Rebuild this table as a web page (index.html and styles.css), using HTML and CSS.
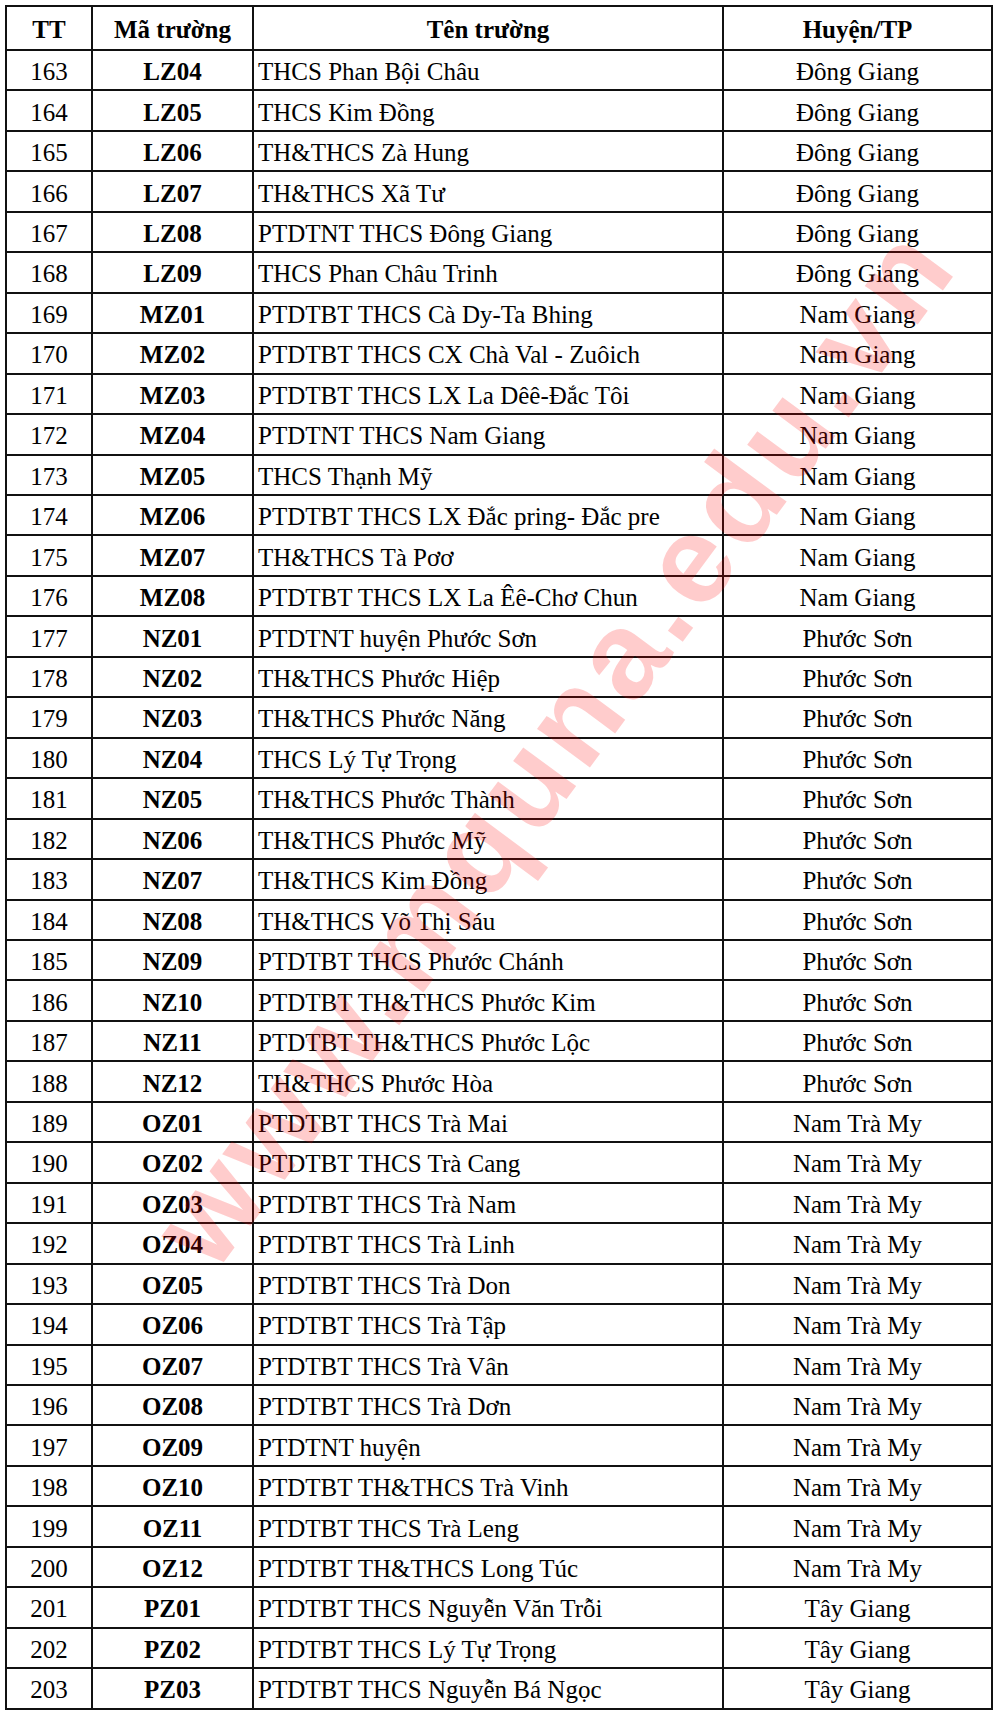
FILE: index.html
```html
<!DOCTYPE html>
<html lang="vi">
<head>
<meta charset="utf-8">
<title>Danh sách trường</title>
<link rel="stylesheet" href="styles.css">
</head>
<body>
<div class="page">
<table class="schools">
<colgroup>
<col class="c-tt"><col class="c-ma"><col class="c-ten"><col class="c-huyen">
</colgroup>
<thead>
<tr><th>TT</th><th>Mã trường</th><th>Tên trường</th><th>Huyện/TP</th></tr>
</thead>
<tbody>
<tr><td>163</td><td class="code">LZ04</td><td class="name">THCS Phan Bội Châu</td><td>Đông Giang</td></tr>
<tr><td>164</td><td class="code">LZ05</td><td class="name">THCS Kim Đồng</td><td>Đông Giang</td></tr>
<tr><td>165</td><td class="code">LZ06</td><td class="name">TH&amp;THCS Zà Hung</td><td>Đông Giang</td></tr>
<tr><td>166</td><td class="code">LZ07</td><td class="name">TH&amp;THCS Xã Tư</td><td>Đông Giang</td></tr>
<tr><td>167</td><td class="code">LZ08</td><td class="name">PTDTNT THCS Đông Giang</td><td>Đông Giang</td></tr>
<tr><td>168</td><td class="code">LZ09</td><td class="name">THCS Phan Châu Trinh</td><td>Đông Giang</td></tr>
<tr><td>169</td><td class="code">MZ01</td><td class="name">PTDTBT THCS Cà Dy-Ta Bhing</td><td>Nam Giang</td></tr>
<tr><td>170</td><td class="code">MZ02</td><td class="name">PTDTBT THCS CX Chà Val - Zuôich</td><td>Nam Giang</td></tr>
<tr><td>171</td><td class="code">MZ03</td><td class="name">PTDTBT THCS LX La Dêê-Đắc Tôi</td><td>Nam Giang</td></tr>
<tr><td>172</td><td class="code">MZ04</td><td class="name">PTDTNT THCS Nam Giang</td><td>Nam Giang</td></tr>
<tr><td>173</td><td class="code">MZ05</td><td class="name">THCS Thạnh Mỹ</td><td>Nam Giang</td></tr>
<tr><td>174</td><td class="code">MZ06</td><td class="name">PTDTBT THCS LX Đắc pring- Đắc pre</td><td>Nam Giang</td></tr>
<tr><td>175</td><td class="code">MZ07</td><td class="name">TH&amp;THCS Tà Pơơ</td><td>Nam Giang</td></tr>
<tr><td>176</td><td class="code">MZ08</td><td class="name">PTDTBT THCS LX La Êê-Chơ Chun</td><td>Nam Giang</td></tr>
<tr><td>177</td><td class="code">NZ01</td><td class="name">PTDTNT huyện Phước Sơn</td><td>Phước Sơn</td></tr>
<tr><td>178</td><td class="code">NZ02</td><td class="name">TH&amp;THCS Phước Hiệp</td><td>Phước Sơn</td></tr>
<tr><td>179</td><td class="code">NZ03</td><td class="name">TH&amp;THCS Phước Năng</td><td>Phước Sơn</td></tr>
<tr><td>180</td><td class="code">NZ04</td><td class="name">THCS Lý Tự Trọng</td><td>Phước Sơn</td></tr>
<tr><td>181</td><td class="code">NZ05</td><td class="name">TH&amp;THCS Phước Thành</td><td>Phước Sơn</td></tr>
<tr><td>182</td><td class="code">NZ06</td><td class="name">TH&amp;THCS Phước Mỹ</td><td>Phước Sơn</td></tr>
<tr><td>183</td><td class="code">NZ07</td><td class="name">TH&amp;THCS Kim Đồng</td><td>Phước Sơn</td></tr>
<tr><td>184</td><td class="code">NZ08</td><td class="name">TH&amp;THCS Võ Thị Sáu</td><td>Phước Sơn</td></tr>
<tr><td>185</td><td class="code">NZ09</td><td class="name">PTDTBT THCS Phước Chánh</td><td>Phước Sơn</td></tr>
<tr><td>186</td><td class="code">NZ10</td><td class="name">PTDTBT TH&amp;THCS Phước Kim</td><td>Phước Sơn</td></tr>
<tr><td>187</td><td class="code">NZ11</td><td class="name">PTDTBT TH&amp;THCS Phước Lộc</td><td>Phước Sơn</td></tr>
<tr><td>188</td><td class="code">NZ12</td><td class="name">TH&amp;THCS Phước Hòa</td><td>Phước Sơn</td></tr>
<tr><td>189</td><td class="code">OZ01</td><td class="name">PTDTBT THCS Trà Mai</td><td>Nam Trà My</td></tr>
<tr><td>190</td><td class="code">OZ02</td><td class="name">PTDTBT THCS Trà Cang</td><td>Nam Trà My</td></tr>
<tr><td>191</td><td class="code">OZ03</td><td class="name">PTDTBT THCS Trà Nam</td><td>Nam Trà My</td></tr>
<tr><td>192</td><td class="code">OZ04</td><td class="name">PTDTBT THCS Trà Linh</td><td>Nam Trà My</td></tr>
<tr><td>193</td><td class="code">OZ05</td><td class="name">PTDTBT THCS Trà Don</td><td>Nam Trà My</td></tr>
<tr><td>194</td><td class="code">OZ06</td><td class="name">PTDTBT THCS Trà Tập</td><td>Nam Trà My</td></tr>
<tr><td>195</td><td class="code">OZ07</td><td class="name">PTDTBT THCS Trà Vân</td><td>Nam Trà My</td></tr>
<tr><td>196</td><td class="code">OZ08</td><td class="name">PTDTBT THCS Trà Dơn</td><td>Nam Trà My</td></tr>
<tr><td>197</td><td class="code">OZ09</td><td class="name">PTDTNT huyện</td><td>Nam Trà My</td></tr>
<tr><td>198</td><td class="code">OZ10</td><td class="name">PTDTBT TH&amp;THCS Trà Vinh</td><td>Nam Trà My</td></tr>
<tr><td>199</td><td class="code">OZ11</td><td class="name">PTDTBT THCS Trà Leng</td><td>Nam Trà My</td></tr>
<tr><td>200</td><td class="code">OZ12</td><td class="name">PTDTBT TH&amp;THCS Long Túc</td><td>Nam Trà My</td></tr>
<tr><td>201</td><td class="code">PZ01</td><td class="name">PTDTBT THCS Nguyễn Văn Trỗi</td><td>Tây Giang</td></tr>
<tr><td>202</td><td class="code">PZ02</td><td class="name">PTDTBT THCS Lý Tự Trọng</td><td>Tây Giang</td></tr>
<tr><td>203</td><td class="code">PZ03</td><td class="name">PTDTBT THCS Nguyễn Bá Ngọc</td><td>Tây Giang</td></tr>
</tbody>
</table>
<div class="watermark">www.mquna.edu.vn</div>
</div>
</body>
</html>
```
FILE: styles.css
```css
html, body {
  margin: 0;
  padding: 0;
  background: #ffffff;
}

.page {
  position: relative;
  width: 1000px;
  height: 1715px;
  overflow: hidden;
  padding-top: 4.5px;
  box-sizing: border-box;
}

.schools {
  margin-left: 5px;
  width: 986px;
  table-layout: fixed;
  border-collapse: collapse;
  font-family: "Liberation Serif", "Times New Roman", serif;
  font-size: 25px;
  color: #000;
}

.c-tt { width: 86px; }
.c-ma { width: 161px; }
.c-ten { width: 470px; }
.c-huyen { width: 269px; }

.schools th,
.schools td {
  border: 2px solid #111;
  padding: 3px 4px 0 4px;
  text-align: center;
  vertical-align: middle;
  white-space: nowrap;
  line-height: 1;
}

.schools thead tr { height: 44.5px; }
.schools tbody tr { height: 40.46px; }

.schools th { font-weight: bold; }
.schools td.code { font-weight: bold; }
.schools td.name { text-align: left; padding-left: 4px; }

.watermark {
  position: absolute;
  left: 553px;
  top: 745px;
  transform: translate(-50%, -50%) rotate(-53.5deg);
  font-family: "Liberation Sans", Arial, sans-serif;
  font-weight: bold;
  font-size: 124px;
  letter-spacing: 6px;
  color: rgba(255, 0, 0, 0.2);
  white-space: nowrap;
  pointer-events: none;
}
```
